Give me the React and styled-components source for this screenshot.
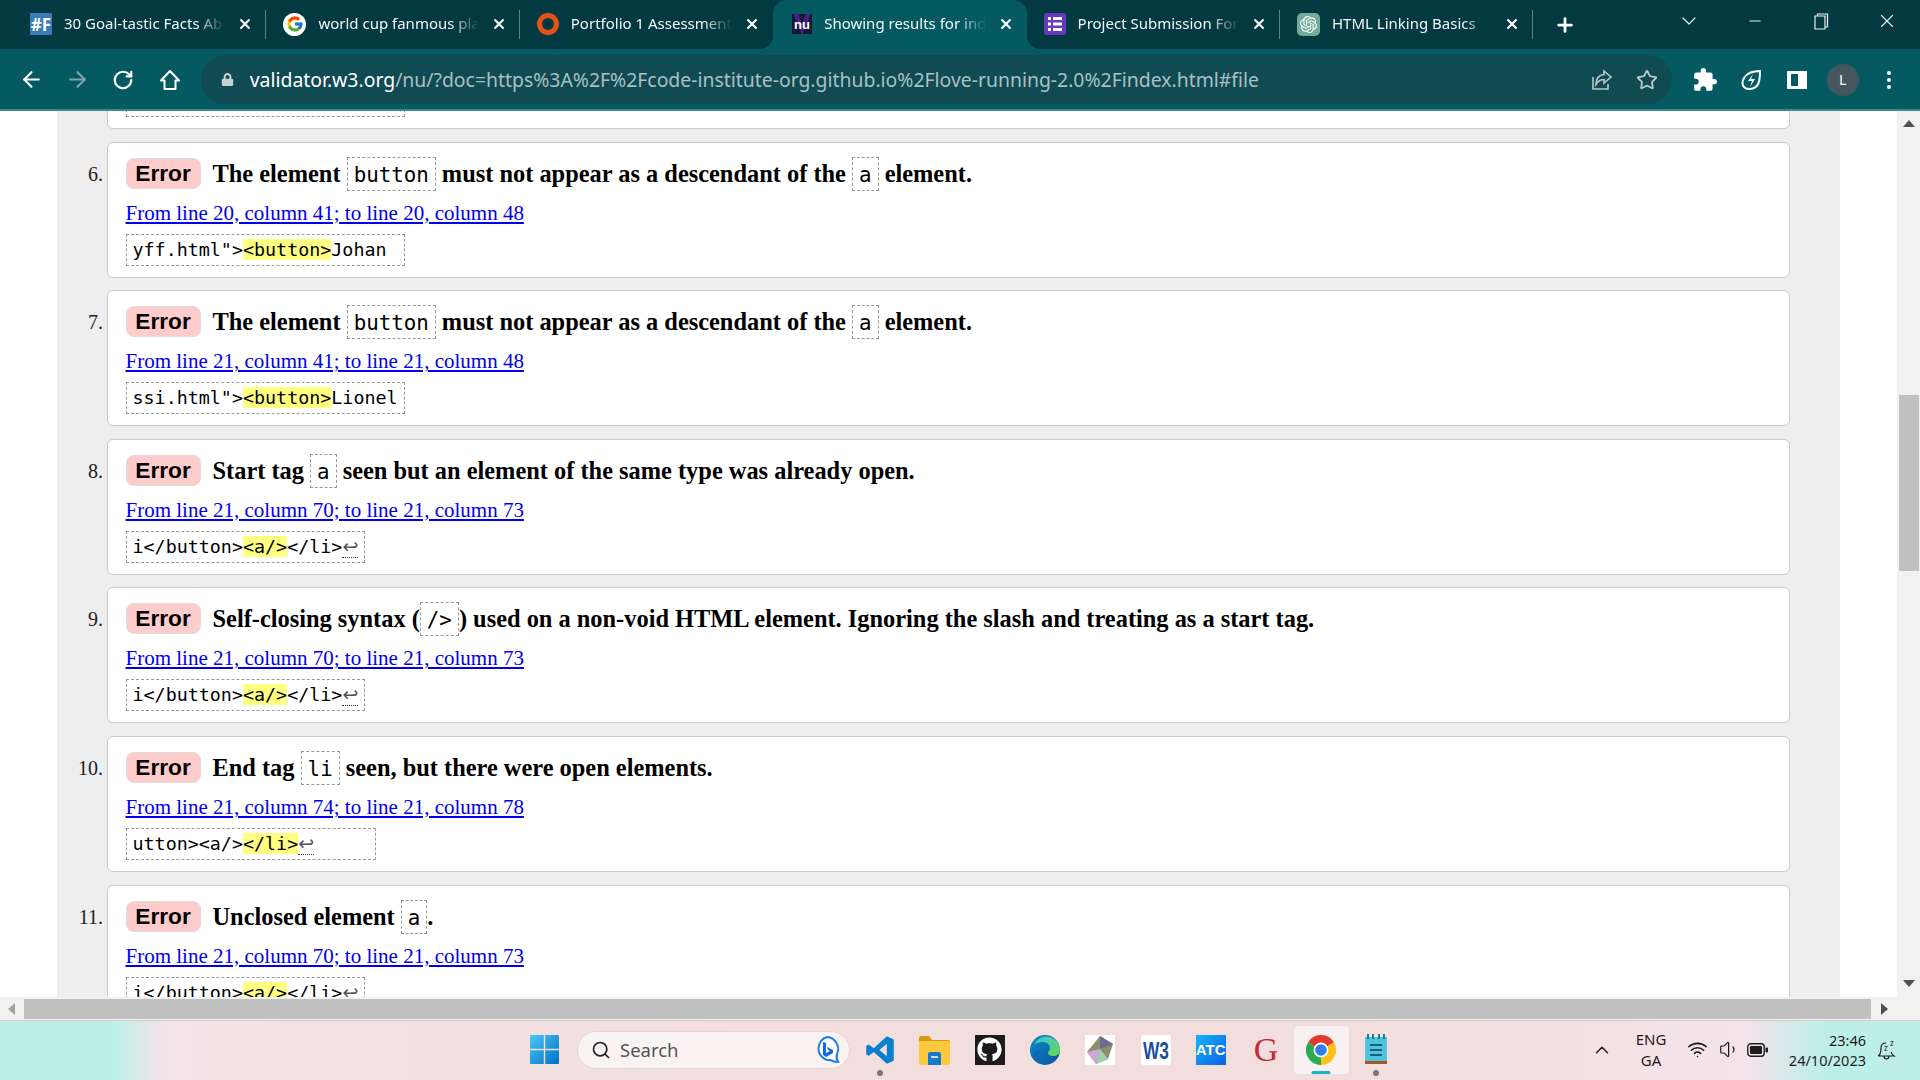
import * as React from "react"
import styled, { createGlobalStyle } from "styled-components";
import { ArrowLeft, ArrowRight, RotateCw, Star, Search, ChevronUp, Wifi, Volume1, X, Plus, Minus, ChevronDown } from "lucide-react";
import { FaLock, FaGithub } from "react-icons/fa";
import { FcGoogle } from "react-icons/fc";
import { MdExtension } from "react-icons/md";
import { SiOpenai } from "react-icons/si";

const Global = createGlobalStyle`
  html, body { margin:0; padding:0; background:#fff; overflow:hidden; }
  * { box-sizing:border-box; }
`

const Frame = styled.div`
  width:1920px;
  height:1080px;
  display:flex;
  flex-direction:column;
  overflow:hidden;
  font-family:"Noto Sans", sans-serif;
`

/* browser chrome */
const TabStrip = styled.div`
  height:49px;
  flex:none;
  display:flex;
  align-items:stretch;
  padding-left:13px;
  background:#033a42;
  color:#fff;
`
const Tab = styled.div`
  position:relative;
  width:253.4px;
  flex:none;
  display:flex;
  align-items:center;
  gap:12px;
  padding:0 13px 1px ${({ $active }) => ($active ? "19px" : "17px")};
  background:${({ $active }) => ($active ? "#055a62" : "transparent")};
  border-radius:14px 14px 0 0;
  &::after{
    content:"";
    display:${({ $sep }) => ($sep ? "block" : "none")};
    position:absolute;
    right:0;
    top:10px;
    height:29px;
    width:1px;
    background:#5d8288;
  }
  ${({ $active }) => $active && `
    &::before{
      content:"";
      position:absolute;
      left:-14px;
      right:-14px;
      bottom:0;
      height:14px;
      background:
        radial-gradient(circle at 0 0, transparent 14px, #055a62 14.5px) left bottom / 14px 14px no-repeat,
        radial-gradient(circle at 100% 0, transparent 14px, #055a62 14.5px) right bottom / 14px 14px no-repeat;
    }
  `}
`
const TabTitle = styled.span`
  flex:1;
  min-width:0;
  white-space:nowrap;
  overflow:hidden;
  font-size:15px;
  line-height:20px;
  padding-bottom:2px;
  color:#f2f6f6;
  mask-image:linear-gradient(90deg, #000 82%, transparent 100%);
`
const TabClose = styled(X)`
  flex:none;
  width:16px;
  height:16px;
  stroke-width:3;
  color:#fff;
`
const SquareIcon = styled.span`
  flex:none;
  width:${({ $size }) => $size || 22}px;
  height:${({ $size }) => $size || 22}px;
  display:flex;
  align-items:center;
  justify-content:center;
  background:${({ $bg }) => $bg};
  color:#fff;
  border-radius:${({ $radius }) => $radius || 0}px;
  font-size:${({ $font }) => $font || 14}px;
  font-weight:700;
  overflow:hidden;
`
const Ring = styled.span`
  flex:none;
  width:22px;
  height:22px;
  border-radius:50%;
  border:5px solid #e8501a;
`
const NewTab = styled.div`
  display:flex;
  align-items:center;
  margin-left:21px;
`
const WindowButtons = styled.div`
  margin-left:auto;
  display:flex;
  align-items:center;
  height:42px;
  color:#e8f0f0;
`
const WindowButton = styled.span`
  width:66px;
  display:flex;
  justify-content:center;
`
const Toolbar = styled.div`
  height:62px;
  flex:none;
  display:flex;
  align-items:flex-start;
  padding:6px 0 0 8px;
  background:#055a62;
  border-bottom:2px solid #3d8a8e;
  color:#fff;
`
const NavButton = styled.span`
  width:46.2px;
  height:49px;
  flex:none;
  display:flex;
  align-items:center;
  justify-content:center;
  color:${({ $dim }) => ($dim ? "#7fa5a9" : "#fff")};
`
const UrlBar = styled.div`
  margin-left:8px;
  width:1471px;
  height:49px;
  flex:none;
  display:flex;
  align-items:center;
  padding-left:20px;
  border-radius:25px;
  background:#104a52;
`
const UrlText = styled.div`
  margin-left:16px;
  flex:1;
  font-size:19.4px;
  color:#aac0c3;
  white-space:nowrap;
  b{ font-weight:400; color:#fff; }
`
const UrlActions = styled.div`
  display:flex;
  align-items:center;
  gap:22px;
  padding-right:14px;
  color:#b9cbcd;
`
const ToolIcons = styled.div`
  display:flex;
  align-items:center;
  height:49px;
  padding-left:10px;
`
const ToolIcon = styled.span`
  width:46px;
  display:flex;
  justify-content:center;
  align-items:center;
`
const Avatar = styled.span`
  width:32px;
  height:32px;
  border-radius:50%;
  background:#45565f;
  font-size:14px;
  display:flex;
  align-items:center;
  justify-content:center;
`

/* page */
const Viewport = styled.div`
  flex:1;
  min-height:0;
  display:flex;
`
const ScrollArea = styled.div`
  flex:1;
  min-width:0;
  overflow:hidden;
  background:#fff;
  padding-left:57px;
`
const Results = styled.ol`
  list-style:none;
  width:1783px;
  margin:-118px 0 0;
  padding:0 0 400px;
  background:#eee;
`
const Row = styled.li`
  display:flex;
  height:148.6px;
`
const Num = styled.span`
  width:46px;
  flex:none;
  margin-right:4px;
  text-align:right;
  padding-top:18px;
  font:20px/28px "Liberation Serif", serif;
  color:#222;
`
const Card = styled.div`
  width:1683px;
  height:136px;
  flex:none;
  padding:14px 17px 0 17.5px;
  background:#fff;
  border:1px solid #ccc;
  border-radius:6px;
`
const Title = styled.p`
  margin:0;
  height:34px;
  font:700 24.4px/34px "Liberation Serif", serif;
  color:#000;
  white-space:nowrap;
`
const Badge = styled.span`
  display:inline-block;
  width:75px;
  height:31px;
  margin-right:12px;
  text-align:center;
  font:700 22.7px/28px "Liberation Sans", sans-serif;
  color:#000;
  background:#ffcccc;
  border:1px solid #ddd;
  border-radius:8px;
  vertical-align:1px;
`
const Token = styled.code`
  display:inline-block;
  height:34px;
  padding:0 6px;
  font:400 20.8px/34px "DejaVu Sans Mono", monospace;
  border:1px dashed #999;
`
const Where = styled.a`
  display:block;
  height:43px;
  padding-top:9px;
  font:21px/26px "Liberation Serif", serif;
  color:#00e;
  text-decoration:underline;
  text-decoration-thickness:2px;
  text-underline-offset:2px;
  width:max-content;
`
const Extract = styled.code`
  display:block;
  width:max-content;
  height:32px;
  padding:0 6px;
  font:400 18.35px/29px "DejaVu Sans Mono", monospace;
  white-space:pre;
  color:#000;
  border:1px dashed #999;
`
const Mark = styled.mark`
  background:#ffff80;
  color:inherit;
`
const LineEnd = styled.span`
  font:19px/20px "DejaVu Sans", sans-serif;
  color:#555;
  border-bottom:1px dotted #333;
`

const VBar = styled.div`
  width:23px;
  flex:none;
  display:flex;
  flex-direction:column;
  align-items:center;
  background:#f1f1f1;
  padding:9px 0 10px;
`
const VThumb = styled.div`
  width:20px;
  height:176px;
  margin:268px 0 0 1px;
  background:#c0c0c0;
`
const Arrow = styled.span`
  width:0;
  height:0;
  flex:none;
  border:6px solid transparent;
  ${({ $dir }) => $dir === "up" && `border-bottom:7px solid #505050; border-top:0;`}
  ${({ $dir }) => $dir === "down" && `border-top:7px solid #505050; border-bottom:0; margin-top:auto;`}
  ${({ $dir }) => $dir === "left" && `border-right:7px solid #a3a3a3; border-left:0;`}
  ${({ $dir }) => $dir === "right" && `border-left:7px solid #505050; border-right:0;`}
`
const HBar = styled.div`
  height:23px;
  flex:none;
  display:flex;
  align-items:center;
  padding-left:8px;
  background:#f1f1f1;
`
const HThumb = styled.div`
  width:1847px;
  height:20px;
  margin:0 10px 0 9px;
  background:#c0c0c0;
`

/* taskbar */
const Taskbar = styled.div`
  height:60px;
  flex:none;
  display:flex;
  align-items:center;
  padding:0 0 2px 530px;
  border-top:1px solid #d5cccc;
  background:linear-gradient(90deg, #bdefe8 0, #bdefe8 6%, #f4e3e8 8.5%, #f2dfdd 40%, #f2dfdd 70%, #f4e3ea 91%, #bdefe8 95%, #bdefe8 100%);
  color:#1c1c1c;
`
const SearchPill = styled.div`
  width:273px;
  height:38px;
  margin-left:18px;
  display:flex;
  align-items:center;
  padding:0 8px 0 13px;
  gap:9px;
  border-radius:19px;
  background:#faf3f3;
  border:1px solid #e3d6d6;
  font-size:18.500px;
  color:#555;
  span{ flex:1; }
`
const Pinned = styled.div`
  display:flex;
  margin-left:2px;
`
const AppButton = styled.span`
  position:relative;
  width:55.2px;
  height:48px;
  display:flex;
  align-items:center;
  justify-content:center;
  border-radius:4px;
  ${({ $open }) => $open && `background:#f9f1f1; box-shadow:0 0 1px #d8cccc;`}
  &::after{
    content:"";
    display:${({ $dot, $open }) => ($dot || $open ? "block" : "none")};
    position:absolute;
    bottom:${({ $open }) => ($open ? "0" : "-2px")};
    left:50%;
    transform:translateX(-50%);
    width:${({ $open }) => ($open ? "19px" : "6px")};
    height:${({ $open }) => ($open ? "3px" : "6px")};
    border-radius:3px;
    background:${({ $open }) => ($open ? "#10b8c4" : "#777")};
  }
`
const Tray = styled.div`
  margin-left:auto;
  display:flex;
  align-items:center;
  height:100%;
`
const Lang = styled.div`
  width:50px;
  margin-left:13px;
  text-align:center;
  font-size:15px;
  line-height:21px;
`
const TrayIcons = styled.div`
  display:flex;
  align-items:center;
  gap:6.5px;
  margin-left:11px;
`
const WifiGlyph = styled(Wifi)`
  margin-right:4.5px;
`
const Clock = styled.div`
  width:92px;
  margin-left:6.5px;
  text-align:right;
  font-size:14.5px;
  line-height:20px;
`
const BellSlot = styled.span`
  margin:0 23.5px 0 10.5px;
  display:flex;
`

const GoogleIcon = () => (
  <SquareIcon $size={23} $bg="#fff" $radius={12}><FcGoogle size={18} /></SquareIcon>
)
const NuIcon = () => (
  <SquareIcon $size={20} $bg="#111b2e" $font={13}>
    <svg width="20" height="22" viewBox="0 0 20 22">
      <path d="M1 0l9 22 9-22h-5l-4 11L6 0z" fill="#4a1f8c" />
      <text x="10" y="16" textAnchor="middle" fontSize="13" fontWeight="700" fill="#fff" fontFamily="Liberation Sans">nu</text>
    </svg>
  </SquareIcon>
)
const FormsIcon = () => (
  <SquareIcon $size={22} $bg="#673ab7" $radius={2}>
    <svg width="14" height="16" viewBox="0 0 14 16" fill="#fff">
      <rect x="0" y="1" width="3" height="3" /><rect x="5" y="1" width="9" height="3" />
      <rect x="0" y="6.5" width="3" height="3" /><rect x="5" y="6.5" width="9" height="3" />
      <rect x="0" y="12" width="3" height="3" /><rect x="5" y="12" width="9" height="3" />
    </svg>
  </SquareIcon>
)

const tabs = [
  { title: "30 Goal-tastic Facts About", icon: <SquareIcon $bg="#3a7ab8" $font={17}>#F</SquareIcon>, sep: true },
  { title: "world cup fanmous players", icon: <GoogleIcon />, sep: true },
  { title: "Portfolio 1 Assessment", icon: <Ring /> },
  { title: "Showing results for index", icon: <NuIcon />, active: true },
  { title: "Project Submission Form", icon: <FormsIcon />, sep: true },
  { title: "HTML Linking Basics", icon: <SquareIcon $size={23} $bg="#74aa9c" $radius={5}><SiOpenai size={17} /></SquareIcon>, sep: true },
]

const HouseIcon = () => (
  <svg width="24" height="24" viewBox="0 0 24 24" fill="none" stroke="currentColor" strokeWidth="2" strokeLinejoin="round">
    <path d="M12 3L3 12.500h3.500V21h11v-8.500H21z" />
  </svg>
)
const ShareIcon = () => (
  <svg width="24" height="24" viewBox="0 0 24 24" fill="none" stroke="currentColor" strokeWidth="1.6">
    <path d="M3 9v12h15v-5" />
    <path d="M14 3l7 6-7 6v-3.5c-4 0-6 1.5-8 5 0-6 3-9.5 8-10z" />
  </svg>
)
const BoltIcon = () => (
  <svg width="24" height="24" viewBox="0 0 24 24" fill="none" stroke="#fff" strokeWidth="2">
    <path d="M21 3c0 10-1 18-11 18-2 0-4-1-5-2-2-2-2-6 0-9 3-5 10-7 16-7z" />
    <path d="M14 6l-5 7h4l-2 6 5-8h-4z" fill="#fff" stroke="none" />
  </svg>
)
const SidebarIcon = () => (
  <svg width="22" height="22" viewBox="0 0 22 22">
    <path d="M1 2h20v18H1z" fill="#fff" />
    <path d="M5 5h7v12H5z" fill="#055a62" />
  </svg>
)
const MenuDots = () => (
  <svg width="6" height="22" viewBox="0 0 6 22" fill="#fff">
    <circle cx="3" cy="4" r="2" /><circle cx="3" cy="11" r="2" /><circle cx="3" cy="18" r="2" />
  </svg>
)

const WindowsLogo = () => (
  <svg width="29" height="29" viewBox="0 0 29 29">
    <defs>
      <linearGradient id="win" x1="0" y1="0" x2="1" y2="1">
        <stop offset="0" stopColor="#4ac8f5" /><stop offset="1" stopColor="#0070c8" />
      </linearGradient>
    </defs>
    <path d="M0 1a1 1 0 011-1h12.800v13.800H0zM15.200 0H28a1 1 0 011 1v12.800H15.200zM0 15.200h13.800V29H1a1 1 0 01-1-1zM15.200 15.200H29V28a1 1 0 01-1 1H15.200z" fill="url(#win)" />
  </svg>
)
const BingIcon = () => (
  <svg width="28" height="30" viewBox="0 0 28 30">
    <path d="M14 2a12 12 0 0110 17c-1 3 0 6 1 8-4 0-6-1-8-2a12 12 0 01-3 0A12 12 0 0114 2z" fill="#fff" stroke="#1f7fe0" strokeWidth="2" />
    <path d="M10 7l3 1v10l4-2-2-1-1-3 6 3v3l-7 4-3-2z" fill="#1668d8" />
  </svg>
)
const VsCode = () => (
  <svg width="30" height="30" viewBox="0 0 24 24">
    <path fillRule="evenodd" d="M17.500 1L23 3.500v17L17.500 23 7 13.500 3 16.500 1 15.500v-7L3 7.500l4 3zM17.500 7L11.500 12l6 5z" fill="#0a7fd0" />
  </svg>
)
const Folder = () => (
  <svg width="31" height="30" viewBox="0 0 31 30">
    <path d="M0 3a2 2 0 012-2h8l3 4h16a2 2 0 012 2v2H0z" fill="#d99a0c" />
    <path d="M0 6h29a2 2 0 012 2v20a2 2 0 01-2 2H2a2 2 0 01-2-2z" fill="#fcc93e" />
    <path d="M9 19a2 2 0 012-2h9a2 2 0 012 2v11H9z" fill="#1a78c8" />
    <path d="M12 21h7v2h-7z" fill="#bfe2fa" />
  </svg>
)
const EdgeIcon = () => (
  <svg width="30" height="30" viewBox="0 0 30 30">
    <defs>
      <linearGradient id="edgeA" x1="0" y1="0" x2="1" y2="1">
        <stop offset="0" stopColor="#0c8cc8" /><stop offset="1" stopColor="#0a4fa0" />
      </linearGradient>
      <linearGradient id="edgeB" x1="0" y1="0" x2="1" y2="1">
        <stop offset="0" stopColor="#36c6e0" /><stop offset="1" stopColor="#6ad84a" />
      </linearGradient>
    </defs>
    <circle cx="15" cy="15" r="15" fill="url(#edgeA)" />
    <path d="M4 10C7 3 14 0 20 2c6 2 10 7 10 13 0 4-3 6-7 6-3 0-5-1-5-3 0-2 2-2 2-5 0-3-3-6-7-6-4 0-7 1-9 3z" fill="url(#edgeB)" />
    <path d="M10 15c-2 5 1 11 8 13-6 2-13-1-15-8 1-3 4-5 7-5z" fill="#0d66b4" />
  </svg>
)
const Crystal = () => (
  <svg width="30" height="30" viewBox="0 0 30 30">
    <path d="M0 0h30v30H0z" fill="#fff" />
    <path d="M15 1l13 8-5 15-12 5-9-12z" fill="#8a8f6e" />
    <path d="M15 1l13 8-13 5z" fill="#6c6a92" />
    <path d="M2 17l13-3-4 15z" fill="#d2a4dc" />
    <path d="M15 14l8 10-12 5z" fill="#9bd4a8" />
  </svg>
)
const W3Icon = () => (
  <SquareIcon $size={30} $bg="#fff" $radius={3}>
    <svg width="30" height="30" viewBox="0 0 30 30">
      <text x="15" y="24" textAnchor="middle" fontSize="24" fill="#1c4f9c" fontFamily="Liberation Sans" textLength="26" lengthAdjust="spacingAndGlyphs">W3</text>
    </svg>
  </SquareIcon>
)
const AtcIcon = styled(SquareIcon)`
  background:linear-gradient(135deg, #12b4f8, #0f5fe8);
  font-family:"Liberation Sans", sans-serif;
`
const RedG = styled.span`
  font:400 34px/30px "Liberation Serif", serif;
  color:#c42a38;
`
const ChromeIcon = () => (
  <svg width="30" height="30" viewBox="0 0 30 30">
    <path d="M15 15L2 7.500A15 15 0 0128 7.500z" fill="#e33b2e" />
    <path d="M15 15L2 7.500A15 15 0 0015 30z" fill="#2da94f" />
    <path d="M15 15L28 7.500A15 15 0 0115 30z" fill="#fbc116" />
    <circle cx="15" cy="15" r="7.500" fill="#fff" />
    <circle cx="15" cy="15" r="5.800" fill="#2f7fe8" />
  </svg>
)
const Notepad = () => (
  <svg width="22" height="32" viewBox="0 0 22 32">
    <path d="M0 3h22v26H0z" fill="#4ec4de" />
    <path d="M0 27h22v3H0z" fill="#9a5a2c" />
    <path d="M2 0h2v5H2zM7 0h2v5H7zM13 0h2v5h-2zM18 0h2v5h-2z" fill="#1c7c94" />
    <path d="M5 10h12v2H5zM5 15h12v2H5zM5 20h12v2H5z" fill="#17627a" />
  </svg>
)
const BatteryIcon = () => (
  <svg width="21" height="14" viewBox="0 0 21 14">
    <rect x="0.800" y="0.800" width="16.400" height="12.400" rx="3" fill="none" stroke="#1c1c1c" strokeWidth="1.400" />
    <rect x="3" y="3" width="12" height="8" rx="1" fill="#1c1c1c" />
    <rect x="18.500" y="4.500" width="2.500" height="5" rx="1" fill="#1c1c1c" />
  </svg>
)
const BellIcon = () => (
  <svg width="20" height="22" viewBox="0 0 20 22" fill="none" stroke="#1c1c1c" strokeWidth="1.200">
    <path d="M4 9c0-3 2-5 5-5v0M1 17c2-1 3-3 3-8M1 17h16c-1.500-1-2.500-2-2.800-4M7 17c0 2 1 3 2.500 3s2.500-1 2.500-3" />
    <text x="7" y="12" fontSize="8" fill="#1c1c1c" stroke="none" fontFamily="Noto Sans">z</text>
    <text x="13" y="7" fontSize="8" fill="#1c1c1c" stroke="none" fontFamily="Noto Sans">z</text>
  </svg>
)

const Enter = () => <LineEnd>↩</LineEnd>

const results = [
  {
    n: 5,
    title: ["The element ", "button", " must not appear as a descendant of the ", "a", " element."],
    where: "From line 19, column 41; to line 19, column 48",
    code: ['mos.html">', "<button>", "Sergio"],
  },
  {
    n: 6,
    title: ["The element ", "button", " must not appear as a descendant of the ", "a", " element."],
    where: "From line 20, column 41; to line 20, column 48",
    code: ['yff.html">', "<button>", "Johan "],
  },
  {
    n: 7,
    title: ["The element ", "button", " must not appear as a descendant of the ", "a", " element."],
    where: "From line 21, column 41; to line 21, column 48",
    code: ['ssi.html">', "<button>", "Lionel"],
  },
  {
    n: 8,
    title: ["Start tag ", "a", " seen but an element of the same type was already open."],
    where: "From line 21, column 70; to line 21, column 73",
    code: ["i</button>", "<a/>", "</li>"],
    enter: true,
  },
  {
    n: 9,
    title: ["Self-closing syntax (", "/>", ") used on a non-void HTML element. Ignoring the slash and treating as a start tag."],
    where: "From line 21, column 70; to line 21, column 73",
    code: ["i</button>", "<a/>", "</li>"],
    enter: true,
  },
  {
    n: 10,
    title: ["End tag ", "li", " seen, but there were open elements."],
    where: "From line 21, column 74; to line 21, column 78",
    code: ["utton><a/>", "</li>", ""],
    enter: true,
    tail: "     ",
  },
  {
    n: 11,
    title: ["Unclosed element ", "a", "."],
    where: "From line 21, column 70; to line 21, column 73",
    code: ["i</button>", "<a/>", "</li>"],
    enter: true,
  },
]

const apps = [
  { key: "code", icon: <VsCode />, dot: true },
  { key: "files", icon: <Folder /> },
  { key: "github", icon: <SquareIcon $size={30} $bg="#1b1b1b"><FaGithub size={25} /></SquareIcon> },
  { key: "edge", icon: <EdgeIcon /> },
  { key: "crystal", icon: <Crystal /> },
  { key: "w3", icon: <W3Icon /> },
  { key: "atc", icon: <AtcIcon $size={30} $font={15}>ATC</AtcIcon> },
  { key: "g", icon: <RedG>G</RedG> },
  { key: "chrome", icon: <ChromeIcon />, open: true },
  { key: "notes", icon: <Notepad />, dot: true },
]

const App = () => {
  return (
    <Frame>
      <Global />
      <TabStrip>
        {tabs.map((t) => (
          <Tab key={t.title} $active={t.active} $sep={t.sep}>
            {t.icon}
            <TabTitle>{t.title}</TabTitle>
            <TabClose />
          </Tab>
        ))}
        <NewTab><Plus size={22} strokeWidth={3} /></NewTab>
        <WindowButtons>
          <WindowButton><ChevronDown size={24} strokeWidth={1.2} /></WindowButton>
          <WindowButton><Minus size={18} strokeWidth={1.4} /></WindowButton>
          <WindowButton>
            <svg width="15" height="17" viewBox="0 0 15 17" fill="none" stroke="currentColor" strokeWidth="1.2">
              <path d="M3.500 3V1h10v13h-2M1 3h10v13H1z" />
            </svg>
          </WindowButton>
          <WindowButton><X size={22} strokeWidth={1.2} /></WindowButton>
        </WindowButtons>
      </TabStrip>
      <Toolbar>
        <NavButton><ArrowLeft size={25} strokeWidth={2} /></NavButton>
        <NavButton $dim><ArrowRight size={25} strokeWidth={2} /></NavButton>
        <NavButton><RotateCw size={22} strokeWidth={2.4} /></NavButton>
        <NavButton><HouseIcon /></NavButton>
        <UrlBar>
          <FaLock size={13} color="#c5d2d4" />
          <UrlText><b>validator.w3.org</b>/nu/?doc=https%3A%2F%2Fcode-institute-org.github.io%2Flove-running-2.0%2Findex.html#file</UrlText>
          <UrlActions>
            <ShareIcon />
            <Star size={22} strokeWidth={2} />
          </UrlActions>
        </UrlBar>
        <ToolIcons>
          <ToolIcon><MdExtension size={26} /></ToolIcon>
          <ToolIcon><BoltIcon /></ToolIcon>
          <ToolIcon><SidebarIcon /></ToolIcon>
          <ToolIcon><Avatar>L</Avatar></ToolIcon>
          <ToolIcon><MenuDots /></ToolIcon>
        </ToolIcons>
      </Toolbar>

      <Viewport>
        <ScrollArea>
          <Results>
            {results.map((r) => (
              <Row key={r.n}>
                <Num>{r.n}.</Num>
                <Card>
                  <Title>
                    <Badge>Error</Badge>
                    {r.title.map((part, i) => (i % 2 ? <Token key={i}>{part}</Token> : part))}
                  </Title>
                  <Where href="#">{r.where}</Where>
                  <Extract>
                    {r.code[0]}<Mark>{r.code[1]}</Mark>{r.code[2]}
                    {r.enter && <Enter />}
                    {r.tail}
                  </Extract>
                </Card>
              </Row>
            ))}
          </Results>
        </ScrollArea>
        <VBar>
          <Arrow $dir="up" />
          <VThumb />
          <Arrow $dir="down" />
        </VBar>
      </Viewport>
      <HBar>
        <Arrow $dir="left" />
        <HThumb />
        <Arrow $dir="right" />
      </HBar>

      <Taskbar>
        <WindowsLogo />
        <SearchPill>
          <Search size={20} color="#222" />
          <span>Search</span>
          <BingIcon />
        </SearchPill>
        <Pinned>
          {apps.map((a) => (
            <AppButton key={a.key} $dot={a.dot} $open={a.open}>{a.icon}</AppButton>
          ))}
        </Pinned>
        <Tray>
          <ChevronUp size={22} strokeWidth={1.6} />
          <Lang>ENG<br />GA</Lang>
          <TrayIcons>
            <WifiGlyph size={21} strokeWidth={1.8} />
            <Volume1 size={21} strokeWidth={1.4} />
            <BatteryIcon />
          </TrayIcons>
          <Clock>23:46<br />24/10/2023</Clock>
          <BellSlot><BellIcon /></BellSlot>
        </Tray>
      </Taskbar>
    </Frame>
  )
}
export default App
